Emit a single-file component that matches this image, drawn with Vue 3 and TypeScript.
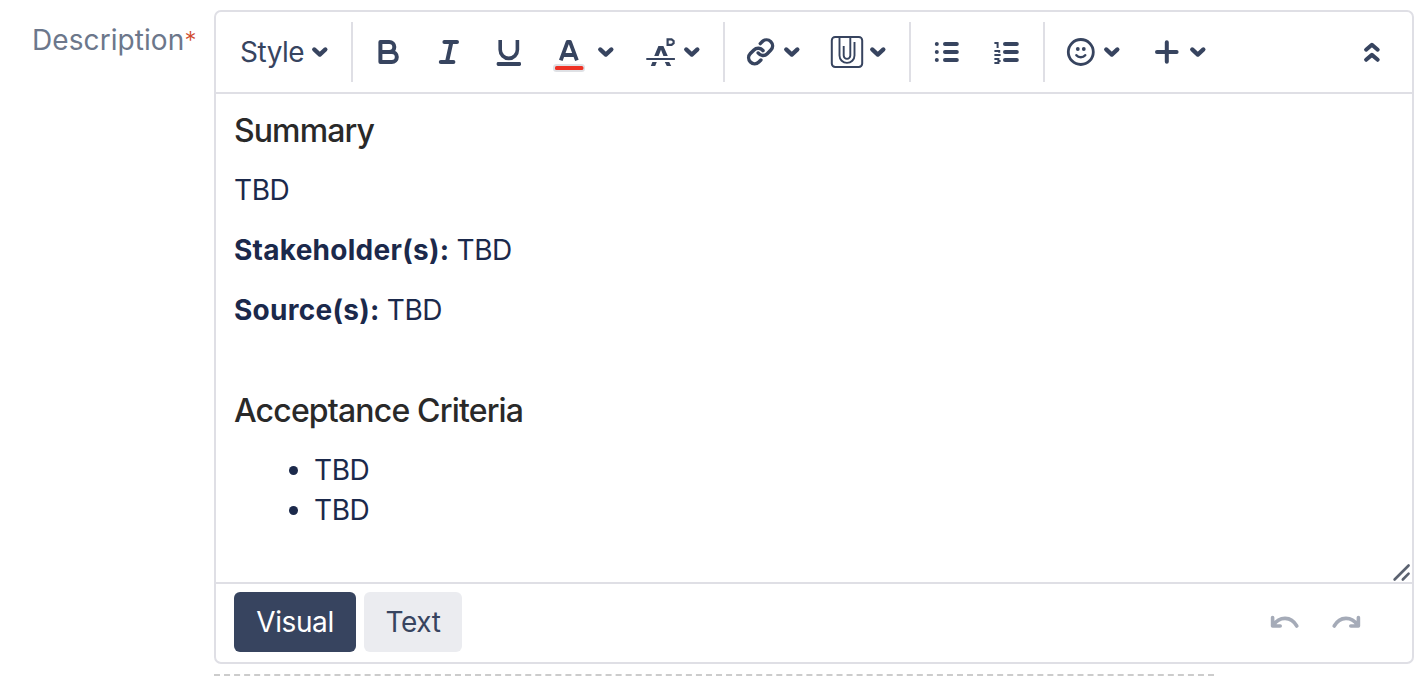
<script setup lang="ts">
interface Field { label: string; value: string }

const fields: Field[] = [
  { label: 'Stakeholder(s):', value: 'TBD' },
  { label: 'Source(s):', value: 'TBD' },
]
const criteria: string[] = ['TBD', 'TBD']
const chevron = 'M56.2 27.4l5.6 5.2l5.6-5.2'
</script>

<template>
  <div class="page">
    <label class="label"><span class="label-text">Description</span><span class="star">*</span></label>
    <div class="field">
      <div class="editor">
        <div class="toolbar">
          <div class="group style-group">
            <span class="style-text">Style</span>
            <svg width="18" height="12" viewBox="53 24 18 12"><path class="chev" :d="chevron" /></svg>
          </div>
          <div class="group">
            <svg width="60" height="60" viewBox="0 0 60 60">
              <path class="line" stroke-width="4" d="M22.4 20h8.9a5 5 0 0 1 0 10h-8.9zM22.4 30h11.4a5 5 0 0 1 0 10H22.4z" />
            </svg>
            <svg width="60" height="60" viewBox="0 0 60 60">
              <path class="line" stroke-width="4" d="M26.4 20H39M22.8 40H35.4M33.4 20L29 40" />
            </svg>
            <svg width="60" height="60" viewBox="0 0 60 60">
              <path class="line butt" stroke-width="3.6" d="M22.2 18V27.8a8.6 8.6 0 0 0 17.2 0V18" />
              <rect class="fill" x="18.7" y="40" width="24.3" height="4" rx="1.4" />
            </svg>
            <svg class="color-button" width="86" height="60" viewBox="0 0 86 60">
              <path class="line butt" stroke-width="3.8" d="M16.8 38.3L23.6 19.9h2.4L32.9 38.3M20 33H30" />
              <rect x="9" y="42" width="32" height="8" rx="3.5" fill="#dfe1e5" />
              <rect x="11" y="44" width="28.4" height="4" rx="1.6" fill="#ee3124" />
              <path class="chev" :d="chevron" />
            </svg>
            <svg width="86" height="60" viewBox="0 0 86 60">
              <path class="fill" d="M28.4 24h5l4.4 10h-4.4L31 27.8L28.6 34h-4.4zM22.4 40h4.4l-1.6 4h-4.4zM34.8 40h4.4l2 4h-4.4z" />
              <rect class="fill" x="16.3" y="36" width="28.6" height="2" />
              <path class="line miter" stroke-width="2.2" d="M37.6 17.4h4l2 1.6v2.2l-2 1.6h-4z" />
              <path class="chev" :d="chevron" />
            </svg>
          </div>
          <div class="group">
            <svg width="86" height="60" viewBox="0 0 86 60">
              <g transform="translate(16.2 15.4) scale(1.2)">
                <path class="line" stroke-width="2.9" d="M10 13a5 5 0 0 0 7.54.54l3-3a5 5 0 0 0-7.07-7.07l-1.72 1.71M14 11a5 5 0 0 0-7.54-.54l-3 3a5 5 0 0 0 7.07 7.07l1.71-1.71" />
              </g>
              <path class="chev" :d="chevron" />
            </svg>
            <svg width="86" height="60" viewBox="0 0 86 60">
              <rect class="line" stroke-width="2" x="15.8" y="15" width="30.4" height="30" rx="3.4" />
              <path class="line butt" stroke-width="1.9" d="M23.5 15V33.4a7.5 7.5 0 0 0 15 0V20M27.7 24V33.6a3.3 3.3 0 0 0 6.6 0V15" />
              <path class="chev" :d="chevron" />
            </svg>
          </div>
          <div class="group">
            <svg width="60" height="60" viewBox="0 0 60 60">
              <path class="line" stroke-width="4" d="M29 22h11.8M29 30h11.8M29 38h11.8" />
              <path class="line" stroke-width="4" d="M20.8 22h.01M20.8 30h.01M20.8 38h.01" />
            </svg>
            <svg width="60" height="60" viewBox="0 0 60 60">
              <path class="line" stroke-width="4" d="M29 22h11.8M29 30h11.8M29 38h11.8" />
              <path class="line miter butt" stroke-width="2" d="M18.4 21h3.2v5M18.4 29h4.8v1.8M18.4 33h6.2M18.4 37h4v4h-4M22.4 39h2.2" />
            </svg>
          </div>
          <div class="group last">
            <svg width="86" height="60" viewBox="0 0 86 60">
              <circle class="line" stroke-width="2.8" cx="30.8" cy="30" r="12.5" />
              <circle class="fill" cx="27.8" cy="27" r="1.9" />
              <circle class="fill" cx="33.8" cy="27" r="1.9" />
              <path class="line" stroke-width="2.5" d="M26.4 33.2a5.5 5 0 0 0 8.8 0" />
              <path class="chev" :d="chevron" />
            </svg>
            <svg width="86" height="60" viewBox="0 0 86 60">
              <path class="line" stroke-width="4" d="M21 30h19.6M30.8 20.2v19.6" />
              <path class="chev" :d="chevron" />
            </svg>
          </div>
          <svg class="collapse" width="60" height="60" viewBox="0 0 60 60">
            <path class="line" stroke-width="4" d="M24.1 27.7l5.8-4.9l5.8 4.9M24.1 37.8l5.8-4.9l5.8 4.9" />
          </svg>
        </div>

        <div class="content">
          <h3 class="summary">Summary</h3>
          <p><span class="value">TBD</span></p>
          <p v-for="field in fields" :key="field.label"><b>{{ field.label }}</b> <span class="value">{{ field.value }}</span></p>
          <h3 class="criteria">Acceptance Criteria</h3>
          <ul>
            <li v-for="(item, index) in criteria" :key="index"><span class="value">{{ item }}</span></li>
          </ul>
          <svg class="grip" width="20" height="20" viewBox="0 0 20 20">
            <path d="M2.6 17.5L16.6 3.5M10.8 17.5L16.6 11.7" />
          </svg>
        </div>

        <div class="footer">
          <button class="tab active" type="button">Visual</button>
          <button class="tab" type="button">Text</button>
          <div class="history">
            <svg width="30" height="14" viewBox="0 0 30 14"><path d="M2.6 2.6V11H10.2M3.4 10.2C9.5 1 21 1 26.8 11" /></svg>
            <svg width="30" height="14" viewBox="0 0 30 14"><path d="M27.4 2.6V11H19.8M26.6 10.2C20.5 1 9 1 3.2 11" /></svg>
          </div>
        </div>
      </div>
      <div class="dashes"></div>
    </div>
  </div>
</template>

<style>
body { margin: 0; background: #fff; }
</style>

<style scoped>
.page {
  display: flex;
  box-sizing: border-box;
  width: 1426px;
  height: 676px;
  padding-top: 10px;
  overflow: hidden;
  background: #fff;
  color: #1b294b;
  font: 400 28px/40px Inter, sans-serif;
}
.label { display: flex; box-sizing: border-box; width: 214px; padding: 10px 0 0 32px; color: #6c778b; white-space: nowrap; }
.label-text { letter-spacing: 0.08px; }
.star { color: #d04a2c; font-size: 24px; font-weight: 300; line-height: 42px; }
.field { width: 1200px; }
.editor { box-sizing: border-box; height: 654px; border: 2px solid #dfdfe5; border-radius: 7px; }
.toolbar { display: flex; align-items: center; box-sizing: border-box; height: 82px; border-bottom: 2px solid #dfdfe5; color: #37445f; }
.group { display: flex; height: 60px; padding: 0 7px 0 5px; border-right: 2px solid #dfdfe5; }
.group.last { border-right: 0; }
.style-group { box-sizing: border-box; width: 137px; padding: 0 0 0 24px; align-items: center; }
.style-text { width: 71px; letter-spacing: -0.5px; }
.color-button { margin-left: 6px; }
.collapse { margin-left: auto; margin-right: 10px; }
svg { display: block; flex: none; }
.line { fill: none; stroke: #37445f; stroke-linecap: round; stroke-linejoin: round; }
.butt { stroke-linecap: butt; }
.miter { stroke-linejoin: miter; }
.fill { fill: #37445f; }
.chev { fill: none; stroke: #37445f; stroke-width: 4.2; stroke-linecap: round; stroke-linejoin: round; }
.content { position: relative; box-sizing: border-box; height: 488px; padding: 17px 18px 0; }
h3 { margin: 0; color: #292929; font-size: 32px; line-height: 40px; font-weight: 500; }
.summary { margin-bottom: 19px; letter-spacing: -0.9px; }
.criteria { margin: 61px 0 19px; letter-spacing: -0.83px; }
p { margin: 0 0 20px; }
.content p + .criteria { margin-top: 61px; }
.value { letter-spacing: -0.4px; }
b { font-weight: 700; letter-spacing: 0.27px; }
p { word-spacing: -0.8px; }
ul { margin: 0; padding: 0 0 0 80px; }
.grip { position: absolute; right: 0; bottom: 0; }
.grip path { fill: none; stroke: #5b6270; stroke-width: 2.6; stroke-linecap: round; }
.footer { display: flex; align-items: center; gap: 8px; box-sizing: border-box; height: 80px; padding: 0 51px 2px 18px; border-top: 2px solid #dfdfe5; }
.tab { width: 98px; height: 60px; padding: 0; border: 0; border-radius: 6px; background: #ebecf0; color: #37445f; font: inherit; letter-spacing: -0.4px; }
.tab.active { width: 122px; background: #37445f; color: #fff; }
.history { display: flex; gap: 31px; margin-left: auto; }
.history path { fill: none; stroke: #a5abb8; stroke-width: 3.6; stroke-linecap: round; stroke-linejoin: round; }
.dashes { width: 1000px; margin-top: 10px; border-top: 2px dashed #ccc; }
</style>
